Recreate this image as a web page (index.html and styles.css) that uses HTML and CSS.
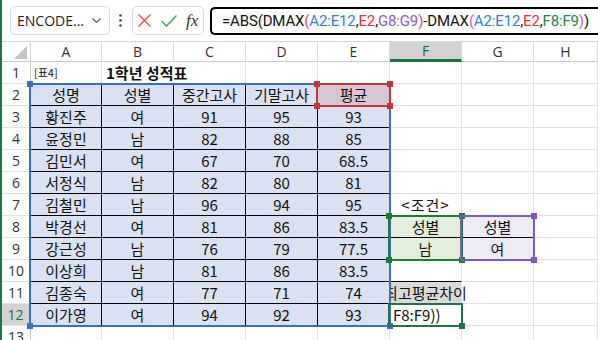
FILE: index.html
```html
<!DOCTYPE html>
<html>
<head>
    <title>Excel DMAX</title>
    <link rel="stylesheet" href="styles.css">
</head>
<body>
<div class="app">
    <!-- formula bar -->
    <div class="fbar">
        <div class="namebox">
            <span>ENCODE...</span>
            <svg width="9" height="6" viewBox="0 0 9 6"><polyline points="0.5,0.5 4.5,4.5 8.5,0.5" fill="none" stroke="#555" stroke-width="1.1"/></svg>
        </div>
        <svg class="dots" width="3" height="13" viewBox="0 0 3 13"><circle cx="1.5" cy="1.5" r="1.3" fill="#444"/><circle cx="1.5" cy="6.5" r="1.3" fill="#444"/><circle cx="1.5" cy="11.5" r="1.3" fill="#444"/></svg>
        <div class="fxbox">
            <svg width="13" height="13" viewBox="0 0 13 13"><path d="M0.5 0.5 L12.5 12.5 M12.5 0.5 L0.5 12.5" stroke="#ee4b4f" stroke-width="1.4"/></svg>
            <svg width="16" height="12" viewBox="0 0 16 12"><polyline points="0.5,6 5.5,11 15.5,0.5" fill="none" stroke="#3aa357" stroke-width="1.4"/></svg>
            <span class="fx">fx</span>
        </div>
        <div class="formula">=ABS(DMAX<span class="p1">(</span><span class="rb">A2:E12</span>,<span class="rr">E2</span>,<span class="rp">G8:G9</span><span class="p1">)</span>-DMAX<span class="p2">(</span><span class="rb">A2:E12</span>,<span class="rr">E2</span>,<span class="rg">F8:F9</span><span class="p2">)</span>)</div>
    </div>

    <!-- sheet grid -->
    <div class="sheet">
        <div class="corner"><svg width="13" height="13" viewBox="0 0 13 13"><polygon points="13,0 13,13 0,13" fill="#c6c6c6"/></svg></div>
        <div class="ch">A</div><div class="ch">B</div><div class="ch">C</div><div class="ch">D</div>
        <div class="ch">E</div><div class="ch on">F</div><div class="ch">G</div><div class="ch">H</div>

        <div class="rh">1</div>
        <div class="c lbl">[표4]</div><div class="c ttl">1학년 성적표</div>
        <div class="c"></div><div class="c"></div><div class="c"></div><div class="c"></div><div class="c"></div><div class="c"></div>

        <div class="rh">2</div>
        <div class="c t">성명</div><div class="c t">성별</div><div class="c t">중간고사</div><div class="c t">기말고사</div><div class="c t avg">평균</div>
        <div class="c"></div><div class="c"></div><div class="c"></div>

        <div class="rh">3</div>
        <div class="c t">황진주</div><div class="c t">여</div><div class="c t">91</div><div class="c t">95</div><div class="c t">93</div>
        <div class="c"></div><div class="c"></div><div class="c"></div>

        <div class="rh">4</div>
        <div class="c t">윤정민</div><div class="c t">남</div><div class="c t">82</div><div class="c t">88</div><div class="c t">85</div>
        <div class="c"></div><div class="c"></div><div class="c"></div>

        <div class="rh">5</div>
        <div class="c t">김민서</div><div class="c t">여</div><div class="c t">67</div><div class="c t">70</div><div class="c t">68.5</div>
        <div class="c"></div><div class="c"></div><div class="c"></div>

        <div class="rh">6</div>
        <div class="c t">서정식</div><div class="c t">남</div><div class="c t">82</div><div class="c t">80</div><div class="c t">81</div>
        <div class="c"></div><div class="c"></div><div class="c"></div>

        <div class="rh">7</div>
        <div class="c t">김철민</div><div class="c t">남</div><div class="c t">96</div><div class="c t">94</div><div class="c t">95</div>
        <div class="c mid">&lt;조건&gt;</div><div class="c"></div><div class="c"></div>

        <div class="rh">8</div>
        <div class="c t">박경선</div><div class="c t">여</div><div class="c t">81</div><div class="c t">86</div><div class="c t">83.5</div>
        <div class="c cg top">성별</div><div class="c cp top">성별</div><div class="c"></div>

        <div class="rh">9</div>
        <div class="c t">강근성</div><div class="c t">남</div><div class="c t">76</div><div class="c t">79</div><div class="c t">77.5</div>
        <div class="c cg">남</div><div class="c cp">여</div><div class="c"></div>

        <div class="rh">10</div>
        <div class="c t">이상희</div><div class="c t">남</div><div class="c t">81</div><div class="c t">86</div><div class="c t">83.5</div>
        <div class="c line"></div><div class="c"></div><div class="c"></div>

        <div class="rh">11</div>
        <div class="c t">김종숙</div><div class="c t">여</div><div class="c t">77</div><div class="c t">71</div><div class="c t">74</div>
        <div class="c gray">최고평균차이</div><div class="c"></div><div class="c"></div>

        <div class="rh on">12</div>
        <div class="c t">이가영</div><div class="c t">여</div><div class="c t">94</div><div class="c t">92</div><div class="c t">93</div>
        <div class="c edit">F8:F9))</div><div class="c"></div><div class="c"></div>

        <div class="rh">13</div>
        <div class="c"></div><div class="c"></div><div class="c"></div><div class="c"></div>
        <div class="c"></div><div class="c"></div><div class="c"></div><div class="c"></div>

        <!-- range highlights drawn over the cells -->
        <div class="rng blue"><i class="h tl"></i><i class="h br"></i><i class="h bl"></i></div>
        <div class="rng red"><i class="h tl"></i><i class="h tr"></i><i class="h bl"></i><i class="h br"></i></div>
        <div class="rng green"><i class="h tl"></i><i class="h tr"></i><i class="h bl"></i><i class="h br"></i></div>
        <div class="rng purple"><i class="h tr"></i><i class="h br"></i></div>
        <div class="rng active"><i class="h br"></i></div>
    </div>
</div>
</body>
</html>
```

FILE: styles.css
```css
body {
    margin: 0;
    background: #fff;
    font-family: "Noto Sans CJK KR", "Noto Sans", sans-serif;
}
.app {
    width: 598px;
    height: 340px;
    overflow: hidden;
    border-left: 2px solid #217346;
    box-sizing: border-box;
}

/* formula bar */
.fbar {
    height: 41px;
    display: flex;
    align-items: center;
    padding-left: 8px;
    white-space: nowrap;
}
.namebox {
    width: 100px;
    height: 29px;
    box-sizing: border-box;
    border: 1px solid #dadada;
    border-radius: 5px;
    display: flex;
    align-items: center;
    justify-content: space-between;
    padding: 0 8px 0 6px;
    font-family: "Open Sans", sans-serif;
    font-size: 14px;
    color: #222;
    flex-shrink: 0;
}
.dots {
    margin-left: 9px;
    flex-shrink: 0;
}
.fxbox {
    margin-left: 10px;
    width: 72px;
    height: 29px;
    box-sizing: border-box;
    border: 1px solid #dadada;
    border-radius: 5px;
    display: flex;
    align-items: center;
    padding-left: 5px;
    gap: 10px;
    flex-shrink: 0;
}
.fx {
    font-family: "Liberation Serif", serif;
    font-style: italic;
    font-size: 17px;
    color: #333;
    margin-left: -1px;
}
.formula {
    margin-left: 6px;
    width: 420px;
    height: 28px;
    box-sizing: border-box;
    border: 2px solid #000;
    border-right: none;
    border-radius: 5px 0 0 5px;
    padding-left: 10px;
    line-height: 24px;
    font-family: Roboto, sans-serif;
    font-size: 15px;
    letter-spacing: -0.15px;
    color: #111;
    flex-shrink: 0;
}
.rb { color: #2f7fd0; }
.rr { color: #d8343d; }
.rp { color: #8a5bc4; }
.rg { color: #21874a; }
.p1 { color: #e5456b; }
.p2 { color: #c563b4; }

/* grid */
.sheet {
    position: relative;
    display: grid;
    grid-template-columns: 29px 71px 72px 72px 72px 72px 72px 72px 1fr;
    grid-template-rows: 21px;
    grid-auto-rows: 22px;
}
.corner, .ch {
    border-top: 1px solid #d6d6d6;
    border-bottom: 1px solid #c8c8c8;
    border-right: 1px solid #dcdcdc;
    box-sizing: border-box;
}
.corner {
    display: flex;
    align-items: flex-end;
    justify-content: flex-end;
    padding: 0 3px 2px 0;
}
.ch {
    text-align: center;
    font-family: "Open Sans", sans-serif;
    font-size: 14px;
    line-height: 19px;
    color: #333;
}
.ch.on {
    background: #d3d3d3;
    color: #1d6b3f;
    border-bottom: 3px solid #217346;
    line-height: 18px;
}
.rh {
    border-right: 1px solid #c8c8c8;
    border-bottom: 1px solid #e3e3e3;
    box-sizing: border-box;
    text-align: center;
    font-family: "Open Sans", sans-serif;
    font-size: 14px;
    line-height: 21px;
    color: #333;
}
.rh.on {
    background: #d3d3d3;
    color: #1d6b3f;
    border-right: 2px solid #217346;
}
.c {
    border-right: 1px solid #e1e1e1;
    border-bottom: 1px solid #e1e1e1;
    box-sizing: border-box;
    text-align: center;
    font-size: 15px;
    line-height: 21px;
    color: #111;
    white-space: nowrap;
}
.lbl {
    text-align: left;
    font-size: 11px;
    padding-left: 3px;
}
.ttl {
    text-align: left;
    font-weight: bold;
    padding-left: 4px;
    border-right: none;
}
.mid { letter-spacing: 1px; }
.t {
    background: #d9e1f2;
    border-right-color: #000;
    border-bottom-color: #000;
}
.avg { background: #d8c4d4; }
.cg { background: #e2efda; }
.cp { background: #edebf6; }
.top { border-bottom-color: #000; }
.line { border-bottom-color: #000; }
.gray {
    background: #d9d9d9;
    display: flex;
    justify-content: center;
    clip-path: inset(0 -20px 0 0);
}
.edit {
    text-align: left;
    padding-left: 3px;
    overflow: hidden;
}

/* range outlines */
.rng {
    position: absolute;
    box-sizing: border-box;
    border: 2px solid;
}
.blue { left: 27px; top: 42px; width: 362px; height: 244px; border-color: #3a6fc4; }
.red { left: 314px; top: 42px; width: 75px; height: 24px; border-color: #c4343c; }
.green { left: 386px; top: 174px; width: 75px; height: 46px; border-color: #1e7b34; }
.purple { left: 458px; top: 174px; width: 75px; height: 46px; border-color: #8058c0; }
.active { left: 386px; top: 262px; width: 75px; height: 24px; border-color: #217346; }
.h {
    position: absolute;
    width: 6px;
    height: 6px;
}
.blue .h { background: #3a6fc4; }
.red .h { background: #c4343c; }
.green .h { background: #1e7b34; }
.purple .h { background: #8058c0; }
.active .h { background: #217346; }
.tl { left: -4px; top: -4px; }
.tr { right: -4px; top: -4px; }
.bl { left: -4px; bottom: -4px; }
.br { right: -4px; bottom: -4px; }
```
